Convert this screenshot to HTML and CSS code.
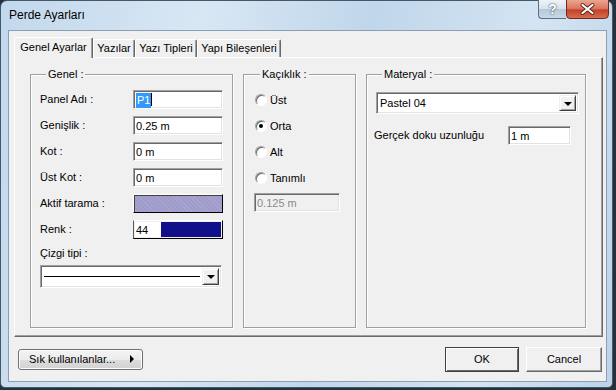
FILE: index.html
```html
<!DOCTYPE html>
<html lang="tr">
<head>
    <meta charset="UTF-8">
    <title>Perde Ayarları</title>
    <link rel="stylesheet" href="styles.css">
</head>
<body>
    <div class="window">
        <div class="titlebar">
            <span class="title">Perde Ayarları</span>
            <div class="caption-buttons">
                <span class="cap-btn help-btn">?</span>
                <svg class="close-btn" width="43" height="19" viewBox="0 0 43 19">
                    <defs>
                        <linearGradient id="red" x1="0" y1="0" x2="0" y2="1">
                            <stop offset="0" stop-color="#eba592"/>
                            <stop offset="0.45" stop-color="#dc7860"/>
                            <stop offset="0.55" stop-color="#c4422a"/>
                            <stop offset="1" stop-color="#d8704f"/>
                        </linearGradient>
                    </defs>
                    <path d="M0.5 0 V15 Q0.5 18.5 4 18.5 H38.5 Q42.5 18.5 42.5 14.5 V0" fill="url(#red)" stroke="#6e2a1f"/>
                    <path d="M16.5 5 L26.5 13 M26.5 5 L16.5 13" stroke="#5a2218" stroke-width="4" stroke-linecap="round"/>
                    <path d="M16.5 5 L26.5 13 M26.5 5 L16.5 13" stroke="#fff" stroke-width="2.2" stroke-linecap="round"/>
                </svg>
            </div>
        </div>

        <div class="client">
            <div class="tabs">
                <span class="tab active tab-genel">Genel Ayarlar</span>
                <span class="tab tab-yazilar">Yazılar</span>
                <span class="tab tab-tipler">Yazı Tipleri</span>
                <span class="tab tab-bilesen">Yapı Bileşenleri</span>
            </div>

            <div class="tab-panel">
                <!-- Genel -->
                <div class="group group-genel">
                    <span class="group-title">Genel :</span>
                    <div class="form-grid">
                        <span class="label">Panel Adı :</span>
                        <span class="field"><span class="selected">P1</span><span class="caret"></span></span>
                        <span class="label">Genişlik :</span>
                        <span class="field">0.25 m</span>
                        <span class="label">Kot :</span>
                        <span class="field">0 m</span>
                        <span class="label">Üst Kot :</span>
                        <span class="field">0 m</span>
                        <span class="label">Aktif tarama :</span>
                        <span class="swatch hatch"></span>
                        <span class="label">Renk :</span>
                        <span class="swatch color-box"><span class="color-num">44</span><span class="color-fill"></span></span>
                    </div>
                    <span class="label line-label">Çizgi tipi :</span>
                    <div class="combo line-combo">
                        <span class="combo-value"><span class="line-sample"></span></span>
                        <span class="drop-btn"><span class="arrow"></span></span>
                    </div>
                </div>

                <!-- Kaçıklık -->
                <div class="group group-kacik">
                    <span class="group-title">Kaçıklık :</span>
                    <div class="radio-list">
                        <label class="radio-row"><span class="radio"></span>Üst</label>
                        <label class="radio-row"><span class="radio checked"></span>Orta</label>
                        <label class="radio-row"><span class="radio"></span>Alt</label>
                        <label class="radio-row"><span class="radio"></span>Tanımlı</label>
                    </div>
                    <span class="field disabled">0.125 m</span>
                </div>

                <!-- Materyal -->
                <div class="group group-materyal">
                    <span class="group-title">Materyal :</span>
                    <div class="combo mat-combo">
                        <span class="combo-value">Pastel 04</span>
                        <span class="drop-btn"><span class="arrow"></span></span>
                    </div>
                    <div class="doku-row">
                        <span class="label">Gerçek doku uzunluğu</span>
                        <span class="field doku-field">1 m</span>
                    </div>
                </div>
            </div>

            <div class="footer">
                <span class="vista-btn">Sık kullanılanlar...<span class="menu-arrow"></span></span>
                <div class="dialog-buttons">
                    <span class="btn default">OK</span>
                    <span class="btn">Cancel</span>
                </div>
            </div>
        </div>
    </div>
</body>
</html>
```

FILE: styles.css
```css
body {
    margin: 0;
    width: 616px;
    height: 390px;
    background: #26313c;
    font-family: 'Liberation Sans', Arial, sans-serif;
    font-size: 11px;
    color: #000;
    overflow: hidden;
}

.window {
    width: 613px;
    height: 388px;
    box-sizing: border-box;
    border: 1px solid #44586c;
    border-radius: 7px 7px 5px 5px;
    background: linear-gradient(100deg, #c2d8ec 0%, #d8e7f4 30%, #c0d6ea 55%, #d4e4f2 80%, #bcd3e8 100%);
    display: flex;
    flex-direction: column;
    padding: 0 5px 5px 7px;
}

/* title bar */
.titlebar {
    height: 29px;
    display: flex;
    justify-content: space-between;
    align-items: flex-start;
    flex: none;
}

.title {
    font-size: 12px;
    line-height: 29px;
    padding-left: 1px;
    color: #000;
}

.caption-buttons {
    display: flex;
    margin-top: -1px;
    margin-right: -2px;
}

.cap-btn {
    height: 19px;
    box-sizing: border-box;
    display: flex;
    align-items: center;
    justify-content: center;
    border: 1px solid #5d6f82;
    border-top: none;
}

.help-btn {
    width: 28px;
    border-radius: 0 0 0 4px;
    border-right: none;
    background: linear-gradient(#eef3f8 0%, #d6e1ec 50%, #b6c7d8 51%, #c9d8e6 100%);
    color: #fff;
    font-weight: bold;
    font-size: 14px;
    text-shadow: 0 0 2px #3d4e60, 0 0 1px #3d4e60;
}

.close-btn {
    display: block;
}

/* client area */
.client {
    flex: 1;
    background: #f0f0f0;
    border: 1px solid #8a9fb4;
    padding: 6px 3px 0 5px;
    display: flex;
    flex-direction: column;
}

.tabs {
    height: 20px;
    display: flex;
    align-items: flex-end;
    flex: none;
}

.tab {
    height: 18px;
    box-sizing: border-box;
    border-top: 1px solid #fff;
    border-left: 1px solid #fff;
    border-right: 1px solid #696969;
    box-shadow: inset -1px 0 0 #a0a0a0;
    border-radius: 2px 2px 0 0;
    white-space: nowrap;
    text-align: center;
    line-height: 16px;
    background: #f0f0f0;
}

.tab.active {
    height: 21px;
    margin-bottom: -1px;
    line-height: 19px;
    position: relative;
    z-index: 1;
}

.tab-genel { width: 79px; }
.tab-yazilar { width: 42px; }
.tab-tipler { width: 62px; }
.tab-bilesen { width: 84px; }

.tab-panel {
    height: 280px;
    box-sizing: border-box;
    flex: none;
    border-top: 1px solid #fff;
    border-left: 1px solid #fff;
    border-right: 1px solid #696969;
    border-bottom: 1px solid #696969;
    box-shadow: inset -1px -1px 0 #a0a0a0;
    padding: 16px 16px 8px 15px;
    display: flex;
    gap: 10px;
}

/* group boxes */
.group {
    box-sizing: border-box;
    border: 1px solid #a0a0a0;
    box-shadow: inset 1px 1px 0 #fff, 1px 1px 0 #fff;
    display: flex;
    flex-direction: column;
    align-items: flex-start;
}

.group-title {
    margin: -7px 0 0 6px;
    padding: 0 2px;
    line-height: 13px;
    background: #f0f0f0;
}

.group-genel {
    width: 203px;
    padding-left: 9px;
}

.group-kacik {
    width: 113px;
    padding-left: 10px;
}

.group-materyal {
    width: 220px;
    padding-left: 9px;
}

.label {
    line-height: 13px;
}

.form-grid {
    margin-top: 9px;
    display: grid;
    grid-template-columns: 93px 90px;
    grid-auto-rows: 19px;
    row-gap: 7px;
    align-items: center;
}

.field {
    height: 19px;
    box-sizing: border-box;
    background: #fff;
    border: 1px solid;
    border-color: #a0a0a0 #fff #fff #a0a0a0;
    box-shadow: inset 1px 1px 0 #696969, inset -1px -1px 0 #e3e3e3;
    padding: 2px 0 0 2px;
    line-height: 14px;
    display: flex;
    white-space: nowrap;
}

.selected {
    background: #3399ff;
    color: #fff;
    padding: 0 1px;
}

.caret {
    width: 1px;
    height: 13px;
    background: #000;
}

.swatch {
    height: 19px;
    box-sizing: border-box;
    border: 1px solid;
    border-color: #fff #000 #000 #fff;
    box-shadow: inset 1px 1px 0 #404040;
}

.hatch {
    background: repeating-linear-gradient(45deg, #9f9cc9 0 2px, #a8a5d0 2px 3px);
}

.color-box {
    display: flex;
    padding: 1px;
    box-shadow: none;
    border-color: #fff #000 #000 #5a5a5a;
}

.color-num {
    width: 25px;
    background: #fff;
    line-height: 16px;
    padding-left: 1px;
}

.color-fill {
    flex: 1;
    background: #10108a;
}

.line-label {
    margin-top: 8px;
}

/* combo boxes */
.combo {
    margin-top: 5px;
    height: 23px;
    box-sizing: border-box;
    background: #fff;
    border: 1px solid;
    border-color: #a0a0a0 #fff #fff #a0a0a0;
    box-shadow: inset 1px 1px 0 #696969, inset -1px -1px 0 #e3e3e3;
    display: flex;
    align-items: stretch;
    padding: 2px;
}

.line-combo {
    width: 182px;
}

.mat-combo {
    margin-top: 11px;
    width: 203px;
    height: 22px;
}

.combo-value {
    flex: 1;
    display: flex;
    align-items: center;
    padding-left: 1px;
}

.line-sample {
    width: 156px;
    height: 1px;
    background: #000;
}

.drop-btn {
    width: 17px;
    box-sizing: border-box;
    background: #f0f0f0;
    border: 1px solid;
    border-color: #f0f0f0 #404040 #404040 #f0f0f0;
    box-shadow: inset 1px 1px 0 #fff, inset -1px -1px 0 #a0a0a0;
    display: flex;
    align-items: center;
    justify-content: center;
}

.arrow {
    width: 0;
    height: 0;
    border-left: 4px solid transparent;
    border-right: 4px solid transparent;
    border-top: 4px solid #000;
    margin-top: 1px;
}

/* radios */
.radio-list {
    margin-top: 9px;
    display: flex;
    flex-direction: column;
    gap: 7px;
}

.radio-row {
    height: 19px;
    display: flex;
    align-items: center;
    gap: 3px;
    padding-left: 1px;
}

.radio {
    width: 12px;
    height: 12px;
    box-sizing: border-box;
    border-radius: 50%;
    border: 1px solid;
    border-color: #a0a0a0 #fff #fff #a0a0a0;
    box-shadow: inset 1px 1px 0 #696969;
    background: #fff;
    display: flex;
    align-items: center;
    justify-content: center;
}

.radio.checked::after {
    content: "";
    width: 4px;
    height: 4px;
    border-radius: 50%;
    background: #000;
}

.field.disabled {
    margin-top: 6px;
    width: 86px;
    background: #f0f0f0;
    color: #8a8a8a;
}

.doku-row {
    margin-top: 12px;
    margin-left: -2px;
    width: 197px;
    display: flex;
    justify-content: space-between;
    align-items: center;
}

.doku-field {
    width: 63px;
}

/* footer */
.footer {
    flex: 1;
    display: flex;
    justify-content: space-between;
    align-items: center;
    padding: 0 1px 0 4px;
}

.vista-btn {
    width: 125px;
    height: 21px;
    box-sizing: border-box;
    border: 1px solid #707070;
    border-radius: 3px;
    background: linear-gradient(#f3f3f3 0%, #ebebeb 50%, #dddddd 51%, #d2d2d2 100%);
    box-shadow: inset 0 0 0 1px #fcfcfc;
    display: flex;
    align-items: center;
    padding: 0 8px 0 10px;
    white-space: nowrap;
    justify-content: space-between;
}

.menu-arrow {
    width: 0;
    height: 0;
    border-top: 4px solid transparent;
    border-bottom: 4px solid transparent;
    border-left: 4px solid #000;
}

.dialog-buttons {
    display: flex;
    gap: 7px;
}

.btn {
    width: 76px;
    height: 25px;
    box-sizing: border-box;
    border: 1px solid;
    border-color: #fff #696969 #696969 #fff;
    box-shadow: inset -1px -1px 0 #a0a0a0;
    background: #f0f0f0;
    display: flex;
    align-items: center;
    justify-content: center;
}

.btn.default {
    width: 74px;
    border-color: #404040;
    box-shadow: inset 1px 1px 0 #fff, inset -1px -1px 0 #696969;
}
```
